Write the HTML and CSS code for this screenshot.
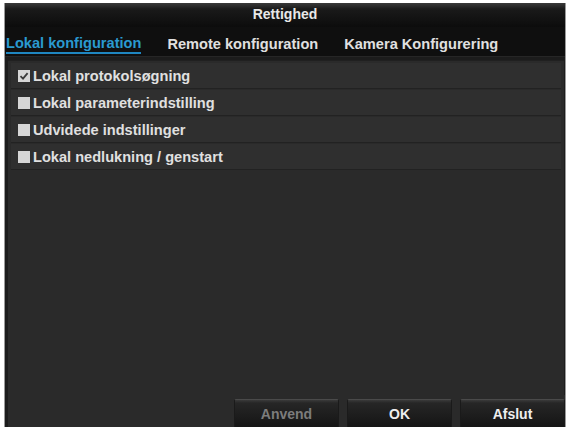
FILE: index.html
```html
<!DOCTYPE html>
<html>
<head>
<meta charset="utf-8">
<link rel="stylesheet" href="styles.css">
</head>
<body>
<div class="window">
  <div class="titlebar">Rettighed</div>
  <div class="tabs">
    <span class="tab active">Lokal konfiguration</span>
    <span class="tab">Remote konfiguration</span>
    <span class="tab">Kamera Konfigurering</span>
  </div>
  <div class="panel">
    <div class="row"><span class="cb checked"><svg viewBox="0 0 12 12" width="12" height="12"><path d="M2.5 6.2 L5 8.6 L9.6 3.2" fill="none" stroke="#3a3a3a" stroke-width="1.8"/></svg></span>Lokal protokolsøgning</div>
    <div class="row"><span class="cb"></span>Lokal parameterindstilling</div>
    <div class="row"><span class="cb"></span>Udvidede indstillinger</div>
    <div class="row"><span class="cb"></span>Lokal nedlukning / genstart</div>
  </div>
  <div class="footer">
    <button class="btn disabled">Anvend</button>
    <button class="btn">OK</button>
    <button class="btn">Afslut</button>
  </div>
</div>
</body>
</html>
```
FILE: styles.css
```css
html, body {
  margin: 0;
  padding: 0;
  background: #ffffff;
}
body {
  padding: 3px 7px 2px 4px;
  font-family: "Liberation Sans", Arial, sans-serif;
  font-weight: bold;
  font-size: 14.6px;
  color: #e6e6e6;
}
.window {
  height: 424px;
  background: #1c1c1c;
  border-left: 1px solid #9a9a9a;
  border-right: 1px solid #9a9a9a;
  display: flex;
  flex-direction: column;
  box-sizing: border-box;
}
.titlebar {
  height: 24px;
  line-height: 22px;
  text-align: center;
  background: linear-gradient(#3a3a3a 0px, #1a1a1a 6px, #0c0c0c 24px);
  color: #e8e8e8;
  font-size: 14px;
}
.tabs {
  height: 29px;
  background: #0f0f0f;
  display: flex;
  align-items: center;
  gap: 26px;
  padding-left: 1px;
  border-bottom: 1px solid #262626;
}
.tab {
  line-height: 18px;
  padding-top: 4px;
  color: #e0e0e0;
}
.tab.active {
  color: #2a9ad0;
  border-bottom: 2px solid #1f86c0;
  padding-bottom: 0;
}
.panel {
  flex: 1;
  margin: 3px 1px 0 3px;
  background: #2a2a2a;
  border-top: 1px solid #202020;
  padding-top: 2px;
}
.row {
  height: 25px;
  margin: 0 3px 1px 3px;
  background: #2f2f2f;
  border-bottom: 1px solid #222;
  display: flex;
  align-items: center;
  padding-left: 7px;
  color: #e0e0e0;
}
.cb {
  width: 12px;
  height: 12px;
  background: #d6d6d6;
  margin-right: 3px;
  display: inline-block;
  flex: none;
}
.cb svg { display: block; }
.footer {
  height: 32px;
  display: flex;
  justify-content: flex-end;
  align-items: flex-end;
  gap: 8px;
  background: #2a2a2a;
  margin: 0 0 0 3px;
}
.btn {
  width: 105px;
  height: 28px;
  font-family: "Liberation Sans", Arial, sans-serif;
  font-weight: bold;
  font-size: 14px;
  color: #eeeeee;
  background: linear-gradient(#3a3a3a 0px, #262626 3px, #141414 28px);
  border: 1px solid #1a1a1a;
  border-top-color: #4a4a4a;
  border-bottom: none;
  border-radius: 2px 2px 0 0;
  padding: 0;
}
.btn.disabled {
  color: #7c7c7c;
}
```
